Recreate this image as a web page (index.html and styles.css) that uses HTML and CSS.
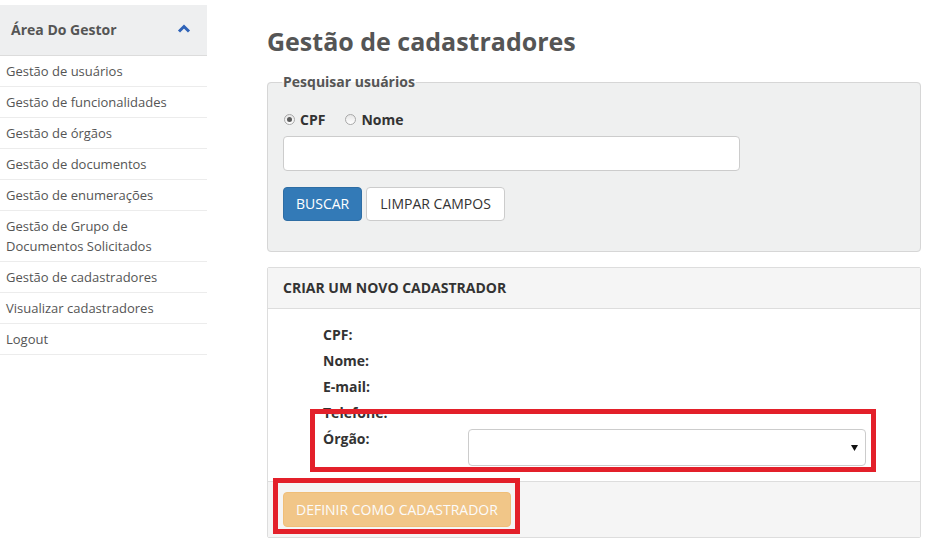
FILE: index.html
```html
<!DOCTYPE html>
<html lang="pt">
<head>
<meta charset="utf-8">
<title>Gestão de cadastradores</title>
<link rel="stylesheet" href="styles.css">
</head>
<body>
<div class="page">
  <aside class="sidebar">
    <div class="side-head">
      <span class="side-title">Área Do Gestor</span>
      <svg class="chev" width="14" height="9" viewBox="0 0 14 9"><polyline points="2,7.5 7,2.5 12,7.5" fill="none" stroke="#2f63b8" stroke-width="3"/></svg>
    </div>
    <ul class="menu">
      <li>Gestão de usuários</li>
      <li>Gestão de funcionalidades</li>
      <li>Gestão de órgãos</li>
      <li>Gestão de documentos</li>
      <li>Gestão de enumerações</li>
      <li>Gestão de Grupo de Documentos Solicitados</li>
      <li>Gestão de cadastradores</li>
      <li>Visualizar cadastradores</li>
      <li>Logout</li>
    </ul>
  </aside>
  <main class="main">
    <h1 class="title">Gestão de cadastradores</h1>
    <fieldset class="search">
      <legend>Pesquisar usuários</legend>
      <div class="radios">
        <span class="radio checked"></span><span class="rlabel">CPF</span>
        <span class="radio"></span><span class="rlabel">Nome</span>
      </div>
      <div class="input"></div>
      <div class="btns">
        <span class="btn btn-primary">BUSCAR</span>
        <span class="btn btn-default">LIMPAR CAMPOS</span>
      </div>
    </fieldset>
    <section class="panel">
      <div class="panel-head">CRIAR UM NOVO CADASTRADOR</div>
      <div class="panel-body">
        <div class="row"><span class="lbl">CPF:</span></div>
        <div class="row"><span class="lbl">Nome:</span></div>
        <div class="row"><span class="lbl">E-mail:</span></div>
        <div class="row"><span class="lbl">Telefone:</span></div>
        <div class="row">
          <span class="lbl">Órgão:</span>
          <div class="select">
            <svg width="7" height="6" viewBox="0 0 7 6"><polygon points="0,0 7,0 3.5,6" fill="#111"/></svg>
          </div>
        </div>
        <div class="mark mark-orgao"></div>
      </div>
      <div class="panel-foot">
        <span class="btn btn-warning">DEFINIR COMO CADASTRADOR</span>
        <div class="mark mark-btn"></div>
      </div>
    </section>
  </main>
</div>
</body>
</html>
```
FILE: styles.css
```css
* { box-sizing: border-box; }
html, body { margin: 0; padding: 0; background: #fff; }
body {
  font-family: "Open Sans", "Noto Sans", sans-serif;
  color: #333;
  font-size: 13px;
}
.page {
  display: flex;
  width: 927px;
  height: 542px;
  overflow: hidden;
}
.sidebar {
  width: 207px;
  margin-top: 5px;
  flex: none;
}
.side-head {
  height: 51px;
  background: #eeeff0;
  border-bottom: 1px solid #dcdcdc;
  display: flex;
  align-items: center;
  justify-content: space-between;
  padding: 0 16px 2px 11px;
}
.side-title {
  font-size: 14px;
  font-weight: 700;
  color: #555;
}
.chev { display: block; margin-top: -1px; }
.menu {
  list-style: none;
  margin: 0;
  padding: 0;
}
.menu li {
  padding: 5px 6px;
  line-height: 20px;
  font-size: 13px;
  color: #555;
  border-bottom: 1px solid #ececec;
}
.main {
  margin-left: 60px;
  width: 654px;
  flex: none;
}
.title {
  margin: 27px 0 0;
  font-size: 25px;
  line-height: 28px;
  font-weight: 700;
  color: #555;
}
.search {
  margin: 17px 0 0;
  padding: 0 15px 30px;
  border: 1px solid #d6d6d6;
  border-radius: 4px;
  background: #eff0f0;
  min-width: 0;
}
.search legend {
  padding: 0 1px;
  margin-left: -1px;
  font-size: 14px;
  font-weight: 700;
  line-height: 20px;
  color: #555;
}
.radios {
  margin-top: 17px;
  display: flex;
  align-items: center;
  height: 20px;
}
.radio {
  width: 11px;
  height: 11px;
  border-radius: 50%;
  border: 1px solid #a8a8a8;
  background: linear-gradient(#e6e6e6, #fff);
  margin-left: 1px;
  margin-right: 5px;
  position: relative;
}
.radio.checked::after {
  content: "";
  position: absolute;
  left: 2px;
  top: 2px;
  width: 5px;
  height: 5px;
  border-radius: 50%;
  background: #5a5a5a;
}
.rlabel {
  font-size: 14px;
  font-weight: 700;
  color: #333;
  margin-right: 19px;
}
.input {
  margin-top: 7px;
  width: 457px;
  height: 35px;
  background: #fff;
  border: 1px solid #ccc;
  border-radius: 4px;
}
.btns {
  margin-top: 16px;
  display: flex;
  gap: 4px;
}
.btn {
  display: inline-block;
  height: 34px;
  line-height: 32px;
  font-size: 14px;
  padding: 0 12px;
  border: 1px solid transparent;
  border-radius: 4px;
  white-space: nowrap;
}
.btn-primary {
  background: #337ab7;
  border-color: #2e6da4;
  color: #fff;
  padding: 0 12px;
}
.btn-default {
  background: #fff;
  border-color: #ccc;
  color: #333;
  padding: 0 13px;
}
.panel {
  margin-top: 15px;
  border: 1px solid #ddd;
  border-radius: 2px;
  position: relative;
}
.panel-head {
  background: #f5f5f5;
  border-bottom: 1px solid #ddd;
  padding: 10px 15px;
  line-height: 20px;
  font-size: 14px;
  font-weight: 700;
  color: #333;
}
.panel-body {
  padding: 13px 54px 15px 55px;
  position: relative;
}
.row {
  display: flex;
  align-items: flex-start;
  min-height: 26px;
}
.lbl {
  width: 145px;
  flex: none;
  font-size: 14px;
  font-weight: 700;
  line-height: 26px;
  color: #333;
}
.select {
  margin-top: 3px;
  flex: 1;
  height: 37px;
  border: 1px solid #ccc;
  border-radius: 4px;
  background: #fff;
  display: flex;
  align-items: center;
  justify-content: flex-end;
  padding-right: 7px;
}
.select svg { display: block; margin-top: 1px; }
.panel-foot {
  background: #f5f5f5;
  border-top: 1px solid #ddd;
  padding: 10px 15px;
  position: relative;
}
.btn-warning {
  height: 35px;
  line-height: 33px;
  background: #f0ad4e;
  border-color: #eea236;
  color: #fff;
  opacity: 0.65;
  padding: 0 12px;
}
.mark {
  position: absolute;
  border: 5px solid #e3202a;
}
.mark-orgao {
  left: 42px;
  top: 100px;
  width: 566px;
  height: 63px;
}
.mark-btn {
  left: 5px;
  top: -4px;
  width: 247px;
  height: 56px;
}
```
